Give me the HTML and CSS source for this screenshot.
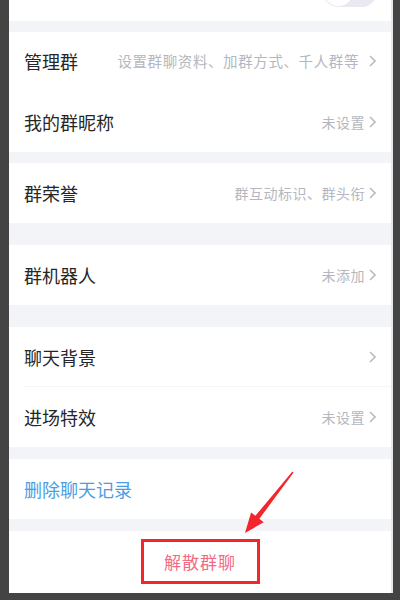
FILE: index.html
```html
<!DOCTYPE html>
<html lang="zh-CN">

<head>
    <meta charset="UTF-8">
    <meta name="viewport" content="width=device-width, initial-scale=1.0">
    <title>群聊设置</title>
    <link rel="stylesheet" href="styles.css">
</head>

<body>

    <div class="screen">
        <div class="group top">
            <div class="toggle"><span class="knob"></span></div>
        </div>

        <div class="group gap-s">
            <div class="row first">
                <span class="title">管理群</span>
                <span class="hint wide">设置群聊资料、加群方式、千人群等</span>
                <svg class="chev" width="7" height="12" viewBox="0 0 7 12"><polyline points="1,1 6,6 1,11" /></svg>
            </div>
            <div class="row">
                <span class="title">我的群昵称</span>
                <span class="hint">未设置</span>
                <svg class="chev" width="7" height="12" viewBox="0 0 7 12"><polyline points="1,1 6,6 1,11" /></svg>
            </div>
        </div>

        <div class="group gap-s">
            <div class="row">
                <span class="title">群荣誉</span>
                <span class="hint">群互动标识、群头衔</span>
                <svg class="chev" width="7" height="12" viewBox="0 0 7 12"><polyline points="1,1 6,6 1,11" /></svg>
            </div>
        </div>

        <div class="group gap-l">
            <div class="row">
                <span class="title">群机器人</span>
                <span class="hint">未添加</span>
                <svg class="chev" width="7" height="12" viewBox="0 0 7 12"><polyline points="1,1 6,6 1,11" /></svg>
            </div>
        </div>

        <div class="group gap-l">
            <div class="row line">
                <span class="title">聊天背景</span>
                <span class="hint"></span>
                <svg class="chev" width="7" height="12" viewBox="0 0 7 12"><polyline points="1,1 6,6 1,11" /></svg>
            </div>
            <div class="row">
                <span class="title">进场特效</span>
                <span class="hint">未设置</span>
                <svg class="chev" width="7" height="12" viewBox="0 0 7 12"><polyline points="1,1 6,6 1,11" /></svg>
            </div>
        </div>

        <div class="group gap-m">
            <div class="row">
                <span class="title blue">删除聊天记录</span>
            </div>
        </div>

        <div class="group gap-m bottom">
            <div class="dismiss">解散群聊</div>
        </div>
    </div>

    <!-- annotation arrow drawn over the screenshot -->
    <svg class="arrow" width="400" height="600" viewBox="0 0 400 600">
        <polygon points="293.6,472.4 259.4,518.8 263.7,522.2 245,533 251.1,512.4 255.4,515.8 292.4,471.6" />
    </svg>

</body>

</html>
```

FILE: styles.css
```css
body {
    margin: 0;
    padding: 0;
    background-color: #444444; /* dark frame around the phone screen */
    font-family: 'Noto Sans CJK SC', 'Noto Sans', sans-serif;
    position: relative;
    width: 400px;
    height: 600px;
    overflow: hidden;
}

.screen {
    width: 382px;
    height: 593px;
    margin-left: 9px;
    background-color: #f3f4f8;
    border-right: 2px solid #e6e7ec;
    display: flex;
    flex-direction: column;
    overflow: hidden;
}

.group {
    background-color: #ffffff;
}

.gap-s {
    margin-top: 11px;
}

.gap-m {
    margin-top: 12px;
}

.gap-l {
    margin-top: 22px;
}

.top {
    height: 21px;
    display: flex;
    justify-content: flex-end;
    padding-right: 14px;
}

.toggle {
    width: 54px;
    height: 31px;
    margin-top: -24px;
    border-radius: 16px;
    background-color: #e9eaf1;
    position: relative;
}

.knob {
    position: absolute;
    left: 1px;
    top: 1px;
    width: 29px;
    height: 29px;
    border-radius: 50%;
    background-color: #ffffff;
}

.row {
    height: 60px;
    display: flex;
    align-items: center;
    padding: 0 15px;
    position: relative;
}

.row.first {
    padding-bottom: 3px;
    height: 57px;
}

.row.line::after {
    content: "";
    position: absolute;
    left: 15px;
    right: 0;
    bottom: 0;
    height: 1px;
    background-color: #f4f5f7;
}

.title {
    font-size: 18px;
    color: #262626;
    flex: 1;
}

.title.blue {
    color: #4b9de3;
}

.hint {
    font-size: 14px;
    color: #b5b7c0;
    letter-spacing: 0.5px;
    margin-right: 4px;
}

.hint.wide {
    font-size: 14.5px;
    letter-spacing: 0.6px;
    margin-right: 10px;
}

.chev polyline {
    fill: none;
    stroke: #b9bcc4;
    stroke-width: 1.6;
}

.bottom {
    flex: 1;
    display: flex;
    justify-content: center;
    padding-top: 8px;
}

.dismiss {
    width: 113px;
    height: 39px;
    border: 3px solid #f5252c;
    display: flex;
    align-items: center;
    justify-content: center;
    font-size: 17px;
    color: #f26a84;
    letter-spacing: 1px;
}

.arrow {
    position: absolute;
    left: 0;
    top: 0;
}

.arrow polygon {
    fill: #f2262c;
}
```
